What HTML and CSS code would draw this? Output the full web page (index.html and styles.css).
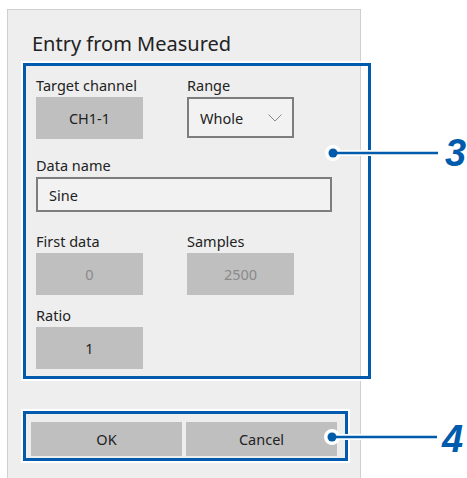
FILE: index.html
```html
<!DOCTYPE html>
<html lang="en">

<head>
    <meta charset="UTF-8">
    <title>Entry from Measured</title>
    <link rel="stylesheet" href="styles.css">
</head>

<body>
    <div class="dialog">
        <div class="title">Entry from Measured</div>

        <!-- Settings -->
        <div class="group-box fields">
            <div class="row row-1">
                <div class="field">
                    <div class="label">Target channel</div>
                    <div class="value">CH1-1</div>
                </div>
                <div class="field">
                    <div class="label">Range</div>
                    <div class="select">
                        <span>Whole</span>
                        <svg width="14" height="8" viewBox="0 0 14 8">
                            <polyline points="0.5,0.5 7,7 13.5,0.5" fill="none" stroke="#8a8a8a" stroke-width="1"/>
                        </svg>
                    </div>
                </div>
            </div>
            <div class="row row-2">
                <div class="field wide">
                    <div class="label">Data name</div>
                    <div class="input">Sine</div>
                </div>
            </div>
            <div class="row row-3">
                <div class="field">
                    <div class="label">First data</div>
                    <div class="value disabled">0</div>
                </div>
                <div class="field">
                    <div class="label">Samples</div>
                    <div class="value disabled">2500</div>
                </div>
            </div>
            <div class="row row-4">
                <div class="field">
                    <div class="label">Ratio</div>
                    <div class="value">1</div>
                </div>
            </div>
        </div>

        <!-- Buttons -->
        <div class="group-box buttons">
            <button class="btn">OK</button>
            <button class="btn">Cancel</button>
        </div>
    </div>

    <!-- Callouts -->
    <svg class="callouts" width="467" height="478" viewBox="0 0 467 478">
        <g stroke="#fff" stroke-width="6" fill="#fff">
            <line x1="333" y1="153" x2="438" y2="153"/>
            <circle cx="333" cy="153" r="5"/>
            <line x1="332" y1="437" x2="437" y2="437"/>
            <circle cx="332" cy="437" r="5"/>
        </g>
        <g stroke="#005bac" stroke-width="2.5" fill="#005bac">
            <line x1="333" y1="153" x2="438" y2="153"/>
            <circle cx="333" cy="153" r="4.5" stroke="none"/>
            <line x1="332" y1="437" x2="437" y2="437"/>
            <circle cx="332" cy="437" r="4.5" stroke="none"/>
        </g>
    </svg>
    <span class="num num-3">3</span>
    <span class="num num-4">4</span>
</body>

</html>
```

FILE: styles.css
```css
body {
    font-family: "Noto Sans", "Open Sans", sans-serif;
    margin: 0;
    padding: 0;
    background-color: #fff;
    color: #222;
    width: 467px;
    height: 478px;
    overflow: hidden;
    position: relative;
}

.dialog {
    margin: 9px 0 0 7px;
    width: 352px;
    height: 480px;
    background-color: #eeeeee;
    border: 1px solid #cfcfcf;
}

.title {
    font-size: 20px;
    line-height: 28px;
    padding: 20px 0 0 24px;
    height: 28px;
    margin-bottom: 5px;
}

.group-box {
    margin-left: 15px;
    width: 319px;
    border: 3px solid #005bac;
    box-shadow: 0 0 0 2px #fff;
}

.fields {
    padding: 7px 13px 7px 10px;
}

.row {
    display: grid;
    grid-template-columns: 107px 107px;
    column-gap: 44px;
}

.row-2 {
    margin-top: 14px;
    grid-template-columns: 296px;
}

.row-3 {
    margin-top: 17px;
}

.row-4 {
    margin-top: 8px;
}

.label {
    font-size: 14.5px;
    line-height: 24px;
    height: 24px;
}

.value {
    height: 42px;
    background-color: #bfbfbf;
    display: flex;
    align-items: center;
    justify-content: center;
    font-size: 14.5px;
}

.value.disabled {
    color: #8a8a8a;
}

.select {
    height: 37px;
    border: 2px solid #7d7d7d;
    background-color: #f2f2f2;
    display: flex;
    align-items: center;
    justify-content: space-between;
    padding: 0 10px 0 11px;
    font-size: 14.5px;
}

.select svg {
    margin-top: 1px;
}

.input {
    height: 31px;
    border: 2px solid #7d7d7d;
    background-color: #f2f2f2;
    display: flex;
    align-items: center;
    padding-left: 11px;
    font-size: 14.5px;
}

.buttons {
    margin-top: 32px;
    display: flex;
    gap: 4px;
    padding: 8px 8px 2px 5px;
    width: 306px;
}

.btn {
    flex: 1;
    height: 34px;
    border: none;
    background-color: #bfbfbf;
    font-family: inherit;
    font-size: 14.5px;
    color: #222;
    padding: 0;
}

.callouts {
    position: absolute;
    left: 0;
    top: 0;
}

.num {
    position: absolute;
    font-family: "Liberation Sans", Arial, sans-serif;
    font-weight: bold;
    font-style: italic;
    font-size: 38px;
    line-height: 38px;
    color: #005bac;
}

.num-3 {
    left: 445px;
    top: 134px;
}

.num-4 {
    left: 442px;
    top: 420px;
}
```
